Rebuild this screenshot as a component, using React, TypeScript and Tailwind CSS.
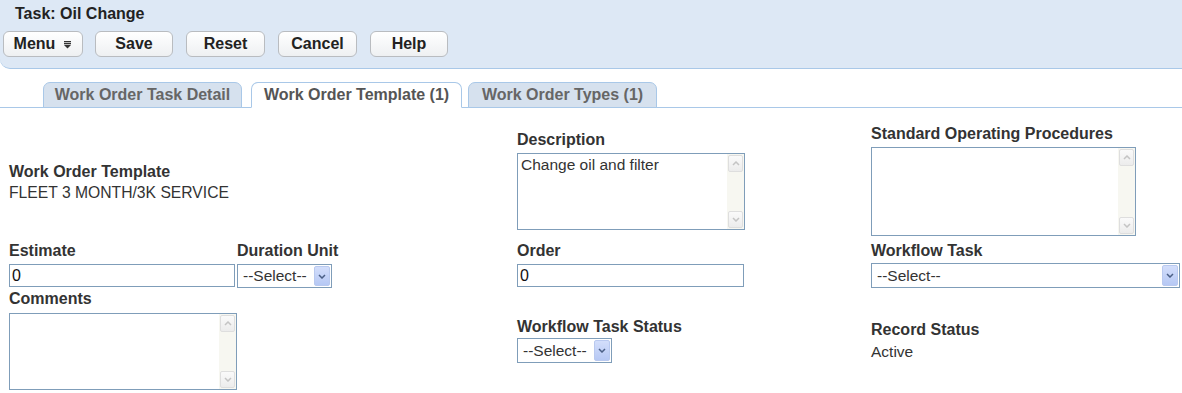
import type { ReactNode } from 'react';

function MenuGlyph() {
  return (
    <svg width="9" height="9" viewBox="0 0 9 9" className="ml-[8px]">
      <rect x="1" y="1" width="7" height="1.3" fill="#333" />
      <rect x="1" y="3" width="7" height="1.3" fill="#333" />
      <path d="M1 5 H8 L4.5 8.5 Z" fill="#333" />
    </svg>
  );
}

function ToolButton({ children, className }: { children: ReactNode; className?: string }) {
  return (
    <button
      className={
        'h-[26px] flex items-center justify-center rounded-[6px] border border-[#b9bcc0] bg-gradient-to-b from-white to-[#eef0f2] text-[16px] font-bold text-[#222] ' +
        (className ?? '')
      }
    >
      {children}
    </button>
  );
}

function Tab({ label, active, className }: { label: string; active?: boolean; className?: string }) {
  return (
    <div
      className={
        'h-[26px] -mb-px flex items-center justify-center rounded-t-[7px] border border-[#a9c8e8] text-[16px] font-bold ' +
        (active ? 'bg-white border-b-white text-[#555]' : 'bg-[#d6e1ee] text-[#666] ') +
        ' ' +
        (className ?? '')
      }
    >
      {label}
    </div>
  );
}

function Chevron({ up, color = '#c4c4c4' }: { up?: boolean; color?: string }) {
  return (
    <svg width="8" height="5" viewBox="0 0 8 5">
      <path d={up ? 'M1 4 L4 1 L7 4' : 'M1 1 L4 4 L7 1'} fill="none" stroke={color} strokeWidth="1.5" />
    </svg>
  );
}

function TextArea({ text, className }: { text?: string; className?: string }) {
  return (
    <div className={'flex border border-[#7f9db9] bg-white ' + (className ?? '')}>
      <div className="flex-1 px-[3px] pt-[2px] text-[15.5px] leading-[18px] text-[#333]">{text}</div>
      <div className="w-[17px] flex flex-col justify-between bg-[#f7f7f1] p-px">
        <div className="h-[17px] flex items-center justify-center rounded-[2px] border border-[#dedede] bg-gradient-to-b from-[#fafafa] to-[#ececec]">
          <Chevron up />
        </div>
        <div className="h-[17px] flex items-center justify-center rounded-[2px] border border-[#dedede] bg-gradient-to-b from-[#fafafa] to-[#ececec]">
          <Chevron />
        </div>
      </div>
    </div>
  );
}

function TextInput({ value, className }: { value: string; className?: string }) {
  return (
    <div className={'h-[23px] flex items-center border border-[#7f9db9] bg-white px-[2px] text-[16px] text-[#111] ' + (className ?? '')}>
      {value}
    </div>
  );
}

function Select({ className }: { className?: string }) {
  return (
    <div className={'flex items-center border border-[#7f9db9] bg-white p-px ' + (className ?? '')}>
      <div className="flex-1 pl-[4px] text-[15.5px] text-[#333]">--Select--</div>
      <div className="w-[16px] self-stretch flex items-center justify-center rounded-[2px] border border-[#b9c9ef] bg-gradient-to-b from-[#d3defb] to-[#b6c8f4]">
        <Chevron color="#4b5f86" />
      </div>
    </div>
  );
}

function Label({ children, className }: { children: ReactNode; className?: string }) {
  return <div className={'text-[16px] leading-[18px] font-bold text-[#333] ' + (className ?? '')}>{children}</div>;
}

export default function App() {
  return (
    <div className="w-[1182px] h-[393px] overflow-hidden bg-white font-['Liberation_Sans',Arial,sans-serif]">
      {/* header */}
      <div className="h-[69px] bg-[#dde8f5] border-b border-[#a9c8e8] rounded-bl-[10px] px-[3px] pt-[5px]">
        <div className="pl-[12px] text-[16px] leading-[18px] font-bold text-[#222]">Task: Oil Change</div>
        <div className="mt-[8px] flex">
          <ToolButton className="w-[80px]">
            Menu
            <MenuGlyph />
          </ToolButton>
          <ToolButton className="w-[78px] ml-[12px]">Save</ToolButton>
          <ToolButton className="w-[79px] ml-[13px]">Reset</ToolButton>
          <ToolButton className="w-[79px] ml-[13px]">Cancel</ToolButton>
          <ToolButton className="w-[78px] ml-[13px]">Help</ToolButton>
        </div>
      </div>

      {/* tabs */}
      <div className="mt-[13px] flex items-end border-b border-[#a9c8e8] pl-[43px]">
        <Tab label="Work Order Task Detail" className="w-[199px]" />
        <Tab label="Work Order Template (1)" active className="w-[211px] ml-[9px]" />
        <Tab label="Work Order Types (1)" className="w-[189px] ml-[6px]" />
      </div>

      {/* form */}
      <div className="flex">
        {/* column 1 */}
        <div className="w-[517px] pl-[9px] pt-[55px]">
          <Label>Work Order Template</Label>
          <div className="mt-[3px] text-[15.7px] leading-[18px] text-[#333]">FLEET 3 MONTH/3K SERVICE</div>
          <div className="mt-[40px] flex">
            <div className="w-[228px]">
              <Label>Estimate</Label>
              <TextInput value="0" className="mt-[4px] w-[226px]" />
            </div>
            <div>
              <Label>Duration Unit</Label>
              <Select className="mt-[4px] w-[95px] h-[24px]" />
            </div>
          </div>
          <Label className="mt-[2px]">Comments</Label>
          <TextArea className="mt-[5px] w-[228px] h-[77px]" />
        </div>

        {/* column 2 */}
        <div className="w-[354px] pt-[23px]">
          <Label>Description</Label>
          <TextArea text="Change oil and filter" className="mt-[4px] w-[228px] h-[77px]" />
          <Label className="mt-[12px]">Order</Label>
          <TextInput value="0" className="mt-[4px] w-[227px]" />
          <Label className="mt-[31px]">Workflow Task Status</Label>
          <Select className="mt-[2px] w-[95px] h-[25px]" />
        </div>

        {/* column 3 */}
        <div className="flex-1 pt-[17px]">
          <Label>Standard Operating Procedures</Label>
          <TextArea className="mt-[4px] w-[265px] h-[89px]" />
          <Label className="mt-[6px]">Workflow Task</Label>
          <Select className="mt-[3px] w-[309px] h-[25px]" />
          <Label className="mt-[33px]">Record Status</Label>
          <div className="mt-[4px] text-[15.5px] leading-[18px] text-[#333]">Active</div>
        </div>
      </div>
    </div>
  );
}
